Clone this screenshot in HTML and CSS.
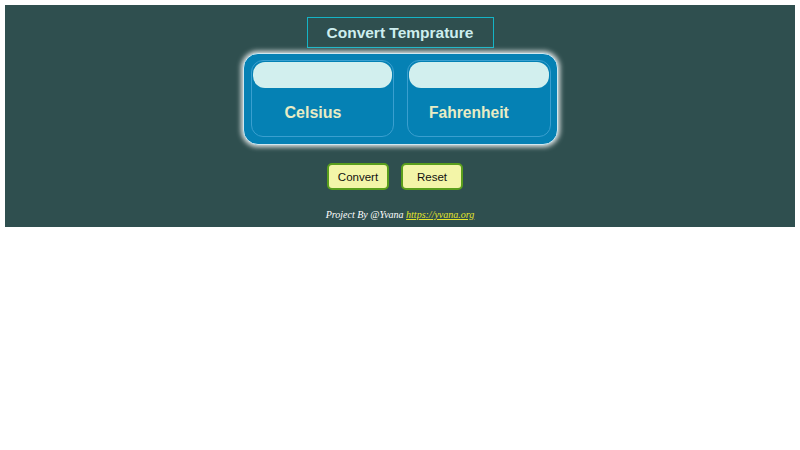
FILE: index.html
```html
<!DOCTYPE html>
<html>
<head>
<meta charset="utf-8">
<link rel="stylesheet" href="styles.css">
</head>
<body>
<div class="app">
  <h1 class="title">Convert Temprature</h1>
  <div class="card">
    <div class="panel">
      <input class="field" type="text">
      <div class="label label-c">Celsius</div>
    </div>
    <div class="panel">
      <input class="field" type="text">
      <div class="label label-f">Fahrenheit</div>
    </div>
  </div>
  <div class="actions">
    <button class="btn">Convert</button>
    <button class="btn">Reset</button>
  </div>
  <p class="footer">Project By @Yvana <a href="#">https://yvana.org</a></p>
</div>
</body>
</html>
```
FILE: styles.css
```css
html, body {
  margin: 0;
  padding: 0;
  background: #ffffff;
}
.app {
  margin: 5px;
  height: 222px;
  box-sizing: border-box;
  background: #2f4f4f;
  padding-top: 12px;
  display: flex;
  flex-direction: column;
  align-items: center;
  font-family: "Liberation Sans", Arial, sans-serif;
}
.title {
  margin: 0;
  width: 187px;
  height: 31px;
  box-sizing: border-box;
  border: 1px solid #14b4c6;
  color: #cdeeee;
  font-size: 15.5px;
  font-weight: bold;
  display: flex;
  align-items: center;
  justify-content: center;
}
.card {
  margin-top: 5px;
  width: 315px;
  height: 92px;
  box-sizing: border-box;
  background: #0581b4;
  border-radius: 15px;
  border: 1px solid #cfe8f0;
  box-shadow: 0 0 5px 2px rgba(255, 255, 255, 0.85);
  padding: 6px 6px 7px 7px;
  display: flex;
  gap: 13px;
}
.panel {
  flex: 1;
  border: 1px solid #3a9fcf;
  border-radius: 12px;
  display: flex;
  flex-direction: column;
  padding: 1px;
}
.field {
  display: block;
  height: 26px;
  box-sizing: border-box;
  margin: 0;
  border: none;
  border-radius: 12px;
  background: #d2efee;
  width: 100%;
  outline: none;
}
.label {
  flex: 1;
  display: flex;
  align-items: center;
  color: #e8ecc4;
  font-size: 16px;
  font-weight: bold;
  padding-top: 3px;
}
.label-c { padding-left: 32px; }
.label-f { padding-left: 20px; font-size: 15.6px; }
.actions {
  margin-top: 18px;
  display: flex;
  gap: 12px;
  padding-right: 10px;
}
.btn {
  width: 62px;
  height: 27px;
  box-sizing: border-box;
  background: #f3f5a8;
  border: 2px solid #5a9e1c;
  border-radius: 5px;
  font-family: "Liberation Sans", Arial, sans-serif;
  font-size: 11.5px;
  color: #111;
  padding: 0;
}
.footer {
  margin: 19px 0 0;
  font-family: "Liberation Serif", "Times New Roman", serif;
  font-style: italic;
  font-size: 10px;
  color: #ffffff;
}
.footer a {
  color: #e6e62a;
}
```
